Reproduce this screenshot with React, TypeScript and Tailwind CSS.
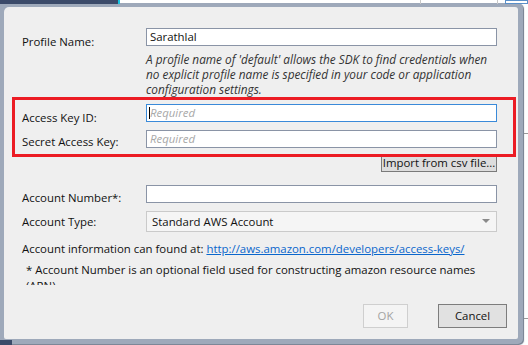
import React from "react";

const font = { fontFamily: '"Open Sans", "Noto Sans", sans-serif' };

function Input({ value, placeholder, focused }: { value?: string; placeholder?: string; focused?: boolean }) {
  return (
    <div
      className={`relative h-[18px] w-[351px] shrink-0 bg-white border flex items-center pl-[3px] text-[11.4px] leading-[16px] ${
        focused ? "border-[#3a8ad9]" : "border-[#8a94a6]"
      }`}
    >
      {focused && <div className="absolute left-[2px] top-[2px] h-[12px] w-px bg-black" />}
      {value ? (
        <span className="text-[#111]">{value}</span>
      ) : (
        <span className="italic text-[#a8a8a8]">{placeholder}</span>
      )}
    </div>
  );
}

export default function App() {
  return (
    <div className="relative w-[528px] h-[345px] overflow-hidden bg-white" style={font}>
      {/* background desktop bits */}
      <div className="absolute left-0 top-0 w-[118px] h-[4px] bg-[#3b4a69]" />
      <div className="absolute left-[118px] top-0 w-[2px] h-[4px] bg-[#19c3e0]" />
      <div className="absolute left-[420px] top-0 w-px h-[4px] bg-[#c8c8c8]" />
      <div className="absolute left-[497px] top-0 w-px h-[4px] bg-[#c8c8c8]" />
      <div className="absolute left-[505px] top-0 w-[23px] h-[4px] border border-[#5a8fc8]" />
      <div className="absolute left-0 top-[340px] w-[12px] h-[5px] bg-[#3b4a69]" />
      <div className="absolute left-[524px] top-[133px] w-[4px] h-px bg-[#999]" />
      <div className="absolute left-[524px] top-[318px] w-[4px] h-px bg-[#999]" />

      {/* dialog frame */}
      <div className="mt-[3px] w-[523px] h-[341px] bg-[#9ea9ba] rounded-r-[5px] rounded-bl-[3px] pt-[4px] pl-[4px] pr-[5px] pb-[2px] shadow-[1px_1px_1px_#6f7a8c]">
        <div className="w-[514px] h-[332px] bg-[#efefef] rounded-tl-[5px] rounded-tr-[3px] rounded-b-[2px] flex flex-col text-[11.4px] leading-[16px] text-[#111]">
          <div className="h-[278px] overflow-hidden pl-[18px] pt-[21px] flex flex-col">
            {/* Profile name */}
            <div className="flex items-start h-[18px] shrink-0">
              <div className="w-[124px] pt-[6px] shrink-0">Profile Name:</div>
              <Input value="Sarathlal" />
            </div>
            <div className="ml-[124px] mt-[6px] italic text-[#333] text-[11.8px] leading-[15px] whitespace-nowrap">
              <div>A profile name of 'default' allows the SDK to find credentials when</div>
              <div>no explicit profile name is specified in your code or application</div>
              <div>configuration settings.</div>
            </div>

            {/* Access key */}
            <div className="flex items-start h-[18px] shrink-0 mt-[7px]">
              <div className="w-[124px] pt-[6px] shrink-0">Access Key ID:</div>
              <Input placeholder="Required" focused />
            </div>
            <div className="flex items-start h-[18px] shrink-0 mt-[8px]">
              <div className="w-[124px] pt-[4px] shrink-0">Secret Access Key:</div>
              <Input placeholder="Required" />
            </div>

            <div className="flex mt-[6px] w-[475px] justify-end shrink-0">
              <div className="h-[18px] w-[116px] bg-[#dddddd] border border-[#7a7a7a] flex items-center justify-center text-[11.4px] text-[#111]">
                Import from csv file...
              </div>
            </div>

            {/* Account number */}
            <div className="flex items-start h-[18px] shrink-0 mt-[13px]">
              <div className="w-[124px] pt-[5px] shrink-0">Account Number*:</div>
              <Input />
            </div>
            <div className="flex items-start h-[21px] shrink-0 mt-[8px]">
              <div className="w-[124px] pt-[3px] shrink-0">Account Type:</div>
              <div className="h-[21px] w-[351px] shrink-0 bg-[#f5f5f5] border border-[#cacaca] flex items-center justify-between pl-[5px] pr-[6px]">
                <span>Standard AWS Account</span>
                <svg width="8" height="5" viewBox="0 0 8 5">
                  <path d="M0 0 L8 0 L4 4 Z" fill="#8a8a8a" />
                </svg>
              </div>
            </div>

            <div className="mt-[9px] whitespace-nowrap shrink-0">
              Account information can found at:{" "}
              <span className="text-[#0a66cc] underline">http://aws.amazon.com/developers/access-keys/</span>
            </div>
            <div className="mt-[5px] pl-[4px] whitespace-nowrap shrink-0">
              <div>* Account Number is an optional field used for constructing amazon resource names</div>
              <div>(ARN)</div>
            </div>
          </div>

          {/* buttons */}
          <div className="flex justify-end pr-[11px] mt-[19px] gap-[30px]">
            <div className="h-[24px] w-[45px] bg-[#f4f4f4] border border-[#cfcfcf] flex items-center justify-center text-[#a3a3a3]">
              OK
            </div>
            <div className="h-[24px] w-[69px] bg-[#e1e1e1] border border-[#7d7d7d] flex items-center justify-center text-[#111]">
              Cancel
            </div>
          </div>
        </div>
      </div>

      {/* red annotation box */}
      <div className="absolute left-[12px] top-[97px] w-[504px] h-[60px] border-[3px] border-[#ec1c24]" />
    </div>
  );
}
